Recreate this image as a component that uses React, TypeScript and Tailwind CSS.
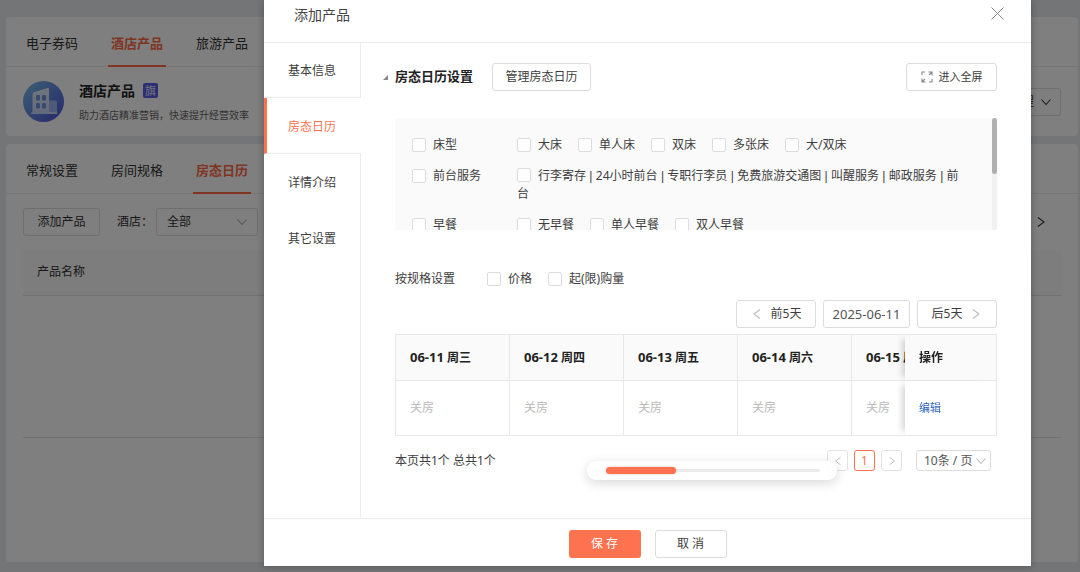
import React, { Fragment, ReactNode } from "react";

const days = ["06-11 周三", "06-12 周四", "06-13 周五", "06-14 周六", "06-15 周日"];
const services = ["行李寄存", "24小时前台", "专职行李员", "免费旅游交通图", "叫醒服务", "邮政服务", "前台"];

type Direction = "left" | "right" | "down";

const chevrons: Record<Direction, string> = {
  left: "M9 1.5 3 6l6 4.5",
  right: "M3 1.5 9 6l-6 4.5",
  down: "M1.5 3.5 6 8.5l4.5-5",
};

function Chevron({ to, className }: { to: Direction; className: string }) {
  return (
    <svg viewBox="0 0 12 12" fill="none" stroke="currentColor" strokeWidth="1.1" className={className} aria-hidden="true">
      <path d={chevrons[to]} />
    </svg>
  );
}

function Button({ children, className = "" }: { children: ReactNode; className?: string }) {
  return (
    <button
      type="button"
      className={`flex h-7 shrink-0 items-center justify-center whitespace-nowrap rounded-[3px] border border-[#dcdcdc] ${className}`}
    >
      {children}
    </button>
  );
}

function Box() {
  return (
    <input
      type="checkbox"
      className="mr-[7px] size-3.5 shrink-0 appearance-none rounded-[2px] border border-[#dcdcdc] bg-white align-[-2px] checked:bg-[#ff7250]"
    />
  );
}

function Option({ children }: { children: ReactNode }) {
  return (
    <label className="flex items-center whitespace-nowrap">
      <Box />
      {children}
    </label>
  );
}

function FilterRow({ name, children }: { name: string; children: ReactNode }) {
  return (
    <div className="flex items-start">
      <div className="w-[105px] shrink-0">
        <Option>{name}</Option>
      </div>
      <div className="flex min-w-0 flex-1 gap-4">{children}</div>
    </div>
  );
}

function TabBar({ tabs, active }: { tabs: string[]; active: string }) {
  return (
    <nav className="flex h-[50px] gap-[27px] border-b border-[#ececec] px-[17px] text-[13px]">
      {tabs.map((tab) => (
        <a
          key={tab}
          href="#"
          className={
            tab === active
              ? "-mb-px flex items-center border-b-2 border-[#ff6a45] px-[3px] pt-1.5 font-bold text-[#ff6a45]"
              : "-mb-px flex items-center border-b-2 border-transparent px-[3px] pt-1.5"
          }
        >
          {tab}
        </a>
      ))}
    </nav>
  );
}

function HotelIcon() {
  return (
    <svg viewBox="0 0 41 41" className="size-[41px] shrink-0" aria-hidden="true">
      <defs>
        <linearGradient id="disc" x1="0.1" y1="0.1" x2="0.9" y2="0.9">
          <stop offset="0" stopColor="#78b4e8" />
          <stop offset="1" stopColor="#4c5cd8" />
        </linearGradient>
        <linearGradient id="tower" x1="0" y1="0" x2="0" y2="1">
          <stop offset="0" stopColor="#e4ecfb" />
          <stop offset="1" stopColor="#c4d4f6" />
        </linearGradient>
      </defs>
      <circle cx="20.5" cy="20.5" r="20.5" fill="url(#disc)" />
      <path d="M26 19.500h6.500q1.500 0 1.500 1.500V31.500H26z" fill="#9db4ee" />
      <path d="M9.500 13q0-1.300 1.300-1.800L24.500 7q1.500-.5 1.500 1V31h7q1.500 0 1.500 2H8q0-2 1.500-2z" fill="url(#tower)" />
      <g fill="#6f92dc">
        <rect x="13" y="14" width="4" height="5.500" rx="1.200" />
        <rect x="19" y="14" width="4" height="5.500" rx="1.200" />
        <rect x="13" y="22" width="4" height="5.500" rx="1.200" />
        <rect x="19" y="22" width="4" height="5.500" rx="1.200" />
      </g>
    </svg>
  );
}

function FullscreenIcon() {
  return (
    <svg viewBox="0 0 12 12" fill="none" stroke="#888" strokeWidth="1.1" className="mr-1.5 size-3" aria-hidden="true">
      <path d="M1 4V1h3M7.500 1H11v3.500M11 8v3H8M4.500 11H1V7.500M8 4l3-3M1 11l3-3" />
    </svg>
  );
}

function ProductPage() {
  return (
    <div className="flex min-h-screen flex-col gap-2 bg-[#e8eaee] pt-[17px] pr-0.5 pb-2.5 pl-1.5 text-[#333]">
      <section className="rounded bg-white">
        <TabBar tabs={["电子券码", "酒店产品", "旅游产品"]} active="酒店产品" />
        <div className="flex h-[69px] items-center pr-[17px] pl-[17px]">
          <HotelIcon />
          <div className="ml-[15px] flex-1">
            <h1 className="flex items-center gap-2 text-sm leading-5 font-bold text-[#222]">
              酒店产品
              <span className="flex size-[15px] items-center justify-center rounded-[2px] bg-[#5b5be6] text-[11px] font-normal text-[#e8e8ff]">
                旗
              </span>
            </h1>
            <p className="mt-1.5 text-[10px] leading-4 text-[#666]">助力酒店精准营销，快速提升经营效率</p>
          </div>
          <Button className="gap-1.5 px-2 text-xs">
            使用教程
            <Chevron to="down" className="size-3" />
          </Button>
        </div>
      </section>

      <section className="flex-1 rounded bg-white text-xs">
        <TabBar tabs={["常规设置", "房间规格", "房态日历"]} active="房态日历" />
        <div className="px-[17px] pt-3.5">
          <div className="flex items-center">
            <Button className="w-[77px]">添加产品</Button>
            <label htmlFor="hotel" className="ml-[17px] w-[39px] whitespace-nowrap">
              酒店：
            </label>
            <div className="grid w-[102px] items-center">
              <select id="hotel" className="col-start-1 row-start-1 h-7 appearance-none rounded-[3px] border border-[#dcdcdc] px-2.5">
                <option>全部</option>
              </select>
              <Chevron to="down" className="pointer-events-none col-start-1 row-start-1 mr-2.5 size-3 justify-self-end text-[#aaa]" />
            </div>
            <button type="button" aria-label="下一页" className="mr-3.5 ml-auto">
              <Chevron to="right" className="size-3" />
            </button>
          </div>
          <table className="mt-3.5 w-full border-b border-[#e2e2e2]">
            <thead>
              <tr className="h-[45px] border-b border-[#e2e2e2] bg-[#fafafa] text-left">
                <th className="px-3.5 font-normal">产品名称</th>
              </tr>
            </thead>
            <tbody>
              <tr className="h-[142px]">
                <td></td>
              </tr>
            </tbody>
          </table>
        </div>
      </section>
    </div>
  );
}

function SideMenu() {
  const base = "flex items-center pt-0.5 pl-6";
  return (
    <nav className="flex w-[97px] shrink-0 flex-col">
      <a href="#" className={`${base} h-[55px] border-r border-b border-[#ececec]`}>
        基本信息
      </a>
      <a href="#" className="flex h-14 items-center border-b border-l-[3px] border-b-[#ececec] border-l-[#ff7250] pt-0.5 pl-[21px] text-[#ff7250]">
        房态日历
      </a>
      <a href="#" className={`${base} h-14 border-r border-[#ececec]`}>
        详情介绍
      </a>
      <a href="#" className={`${base} h-14 border-r border-[#ececec]`}>
        其它设置
      </a>
      <div className="flex-1 border-r border-[#ececec]" />
    </nav>
  );
}

function Filters() {
  return (
    <div className="mt-[27px] flex h-28 overflow-hidden bg-[#fafafa]">
      <div className="flex min-w-0 flex-1 flex-col gap-[13px] overflow-hidden pt-[18px] pr-6 pl-[17px] leading-[18px]">
        <FilterRow name="床型">
          {["大床", "单人床", "双床", "多张床", "大/双床"].map((item) => (
            <Option key={item}>{item}</Option>
          ))}
        </FilterRow>
        <FilterRow name="前台服务">
          <label>
            <Box />
            {services.map((item, index) => (
              <Fragment key={item}>
                {index > 0 && <span className="font-['Liberation_Sans',sans-serif]"> | </span>}
                {item}
              </Fragment>
            ))}
          </label>
        </FilterRow>
        <FilterRow name="早餐">
          {["无早餐", "单人早餐", "双人早餐"].map((item) => (
            <Option key={item}>{item}</Option>
          ))}
        </FilterRow>
      </div>
      <div className="w-[5px] bg-[#f1f1f1]">
        <div className="h-14 rounded-full bg-[#b0b0b0]" />
      </div>
    </div>
  );
}

function Calendar() {
  const pinned = "sticky right-0 px-3.5 shadow-[-7px_0_6px_-4px_rgba(0,0,0,0.16)]";
  return (
    <div className="mt-1.5 overflow-hidden border border-[#e8e8e8]">
      <table className="w-full min-w-[661px] table-fixed border-separate border-spacing-0 text-left">
        <thead>
          <tr className="h-[46px] bg-[#fafafa] text-[#222]">
            {days.map((day) => {
              const [date, weekday] = day.split(" ");
              return (
                <th key={day} className="w-[114px] border-r border-b border-[#e8e8e8] px-3.5 font-bold whitespace-nowrap">
                  <span className="text-[13px]">{date}</span> {weekday}
                </th>
              );
            })}
            <th className={`${pinned} w-[91px] border-b border-[#e8e8e8] bg-[#fafafa] font-bold`}>操作</th>
          </tr>
        </thead>
        <tbody>
          <tr className="h-[54px]">
            {days.map((day) => (
              <td key={day} className="border-r border-[#e8e8e8] px-3.5 text-[#bbb]">
                关房
              </td>
            ))}
            <td className={`${pinned} bg-white text-[11px]`}>
              <a href="#" className="text-[#2a62b8]">
                编辑
              </a>
            </td>
          </tr>
        </tbody>
      </table>
    </div>
  );
}

function Pagination() {
  const square = "flex h-[21px] w-[21px] items-center justify-center rounded-[3px] border";
  return (
    <div className="relative mt-3.5 flex items-center">
      <span>本页共1个 总共1个</span>
      <div className="mr-1.5 ml-auto flex items-center gap-1.5">
        <button type="button" aria-label="上一页" className={`${square} border-[#e2e2e2] text-[#bbb]`}>
          <Chevron to="left" className="size-2.5" />
        </button>
        <button type="button" className={`${square} border-[#ff7250] text-[#ff7250]`}>
          1
        </button>
        <button type="button" aria-label="下一页" className={`${square} border-[#e2e2e2] text-[#bbb]`}>
          <Chevron to="right" className="size-2.5" />
        </button>
        <div className="ml-2 grid w-[75px] items-center">
          <select aria-label="每页条数" className="col-start-1 row-start-1 h-[21px] appearance-none rounded-[3px] border border-[#dcdcdc] pl-[7px] leading-4 text-[#555]">
            <option>10条 / 页</option>
          </select>
          <Chevron to="down" className="pointer-events-none col-start-1 row-start-1 mr-1 size-3 justify-self-end text-[#bbb]" />
        </div>
      </div>
      <div className="absolute top-[11px] right-40 flex h-[19px] w-[250px] items-center rounded-full bg-white/90 pr-[17px] pl-[19px] shadow-[0_3px_12px_rgba(0,0,0,0.16)]">
        <div className="z-10 h-[7px] w-[70px] rounded-full bg-[#ff7250] shadow-[0_0_3px_rgba(0,0,0,0.2)]" />
        <div className="h-[3px] flex-1 rounded-r-full bg-[#ebebeb]" />
      </div>
    </div>
  );
}

function ProductDialog() {
  return (
    <div role="dialog" aria-label="添加产品" className="min-w-0 flex-1 bg-white text-xs text-[#3d3d3d] shadow-[0_0_8px_rgba(0,0,0,0.3)]">
      <header className="flex h-[43px] items-start justify-between border-b border-[#ececec] pr-[27px] pl-[30px]">
        <h2 className="pt-[5px] text-sm leading-5 text-[#444]">添加产品</h2>
        <button type="button" aria-label="关闭" className="pt-[7px]">
          <svg viewBox="0 0 13 13" stroke="#888" strokeWidth="1" className="size-[13px]" aria-hidden="true">
            <path d="M.5.5l12 12M12.500.5l-12 12" />
          </svg>
        </button>
      </header>
      <div className="flex">
        <SideMenu />
        <main className="min-w-0 flex-1 px-[34px] pt-5 pb-[47px]">
          <div className="flex items-center">
            <svg viewBox="0 0 5 5" className="mr-[7px] -ml-3 size-[5px]" aria-hidden="true">
              <path d="M5 0v5H0z" fill="#888" />
            </svg>
            <h3 className="text-[13px] font-bold text-[#222]">房态日历设置</h3>
            <Button className="ml-[19px] w-[99px]">管理房态日历</Button>
            <Button className="ml-auto w-[91px] text-[11px]">
              <FullscreenIcon />
              进入全屏
            </Button>
          </div>
          <Filters />
          <div className="mt-10 flex gap-4 leading-[18px]">
            <span className="w-[76px]">按规格设置</span>
            <Option>价格</Option>
            <Option>起(限)购量</Option>
          </div>
          <div className="mt-3 flex justify-end gap-[7px]">
            <Button className="w-20 gap-2">
              <Chevron to="left" className="size-3 text-[#bbb]" />
              前5天
            </Button>
            <input
              aria-label="日期"
              defaultValue="2025-06-11"
              className="h-7 w-[87px] rounded-[3px] border border-[#dcdcdc] text-center text-[13px] text-[#555]"
            />
            <Button className="w-20 gap-2">
              后5天
              <Chevron to="right" className="size-3 text-[#bbb]" />
            </Button>
          </div>
          <Calendar />
          <Pagination />
        </main>
      </div>
      <footer className="flex h-12 items-center justify-center gap-3.5 border-t border-[#ececec] pt-0.5">
        <button type="button" className="h-7 w-[72px] rounded-[3px] bg-[#ff7250] text-white">
          保 存
        </button>
        <Button className="w-[72px]">取 消</Button>
      </footer>
    </div>
  );
}

export default function App() {
  return (
    <div className="relative min-h-screen font-['Noto_Sans','Noto_Sans_CJK_SC',sans-serif]">
      <ProductPage />
      <div className="absolute inset-0 flex items-start bg-black/50 pr-[49px] pl-[264px]">
        <ProductDialog />
      </div>
    </div>
  );
}
